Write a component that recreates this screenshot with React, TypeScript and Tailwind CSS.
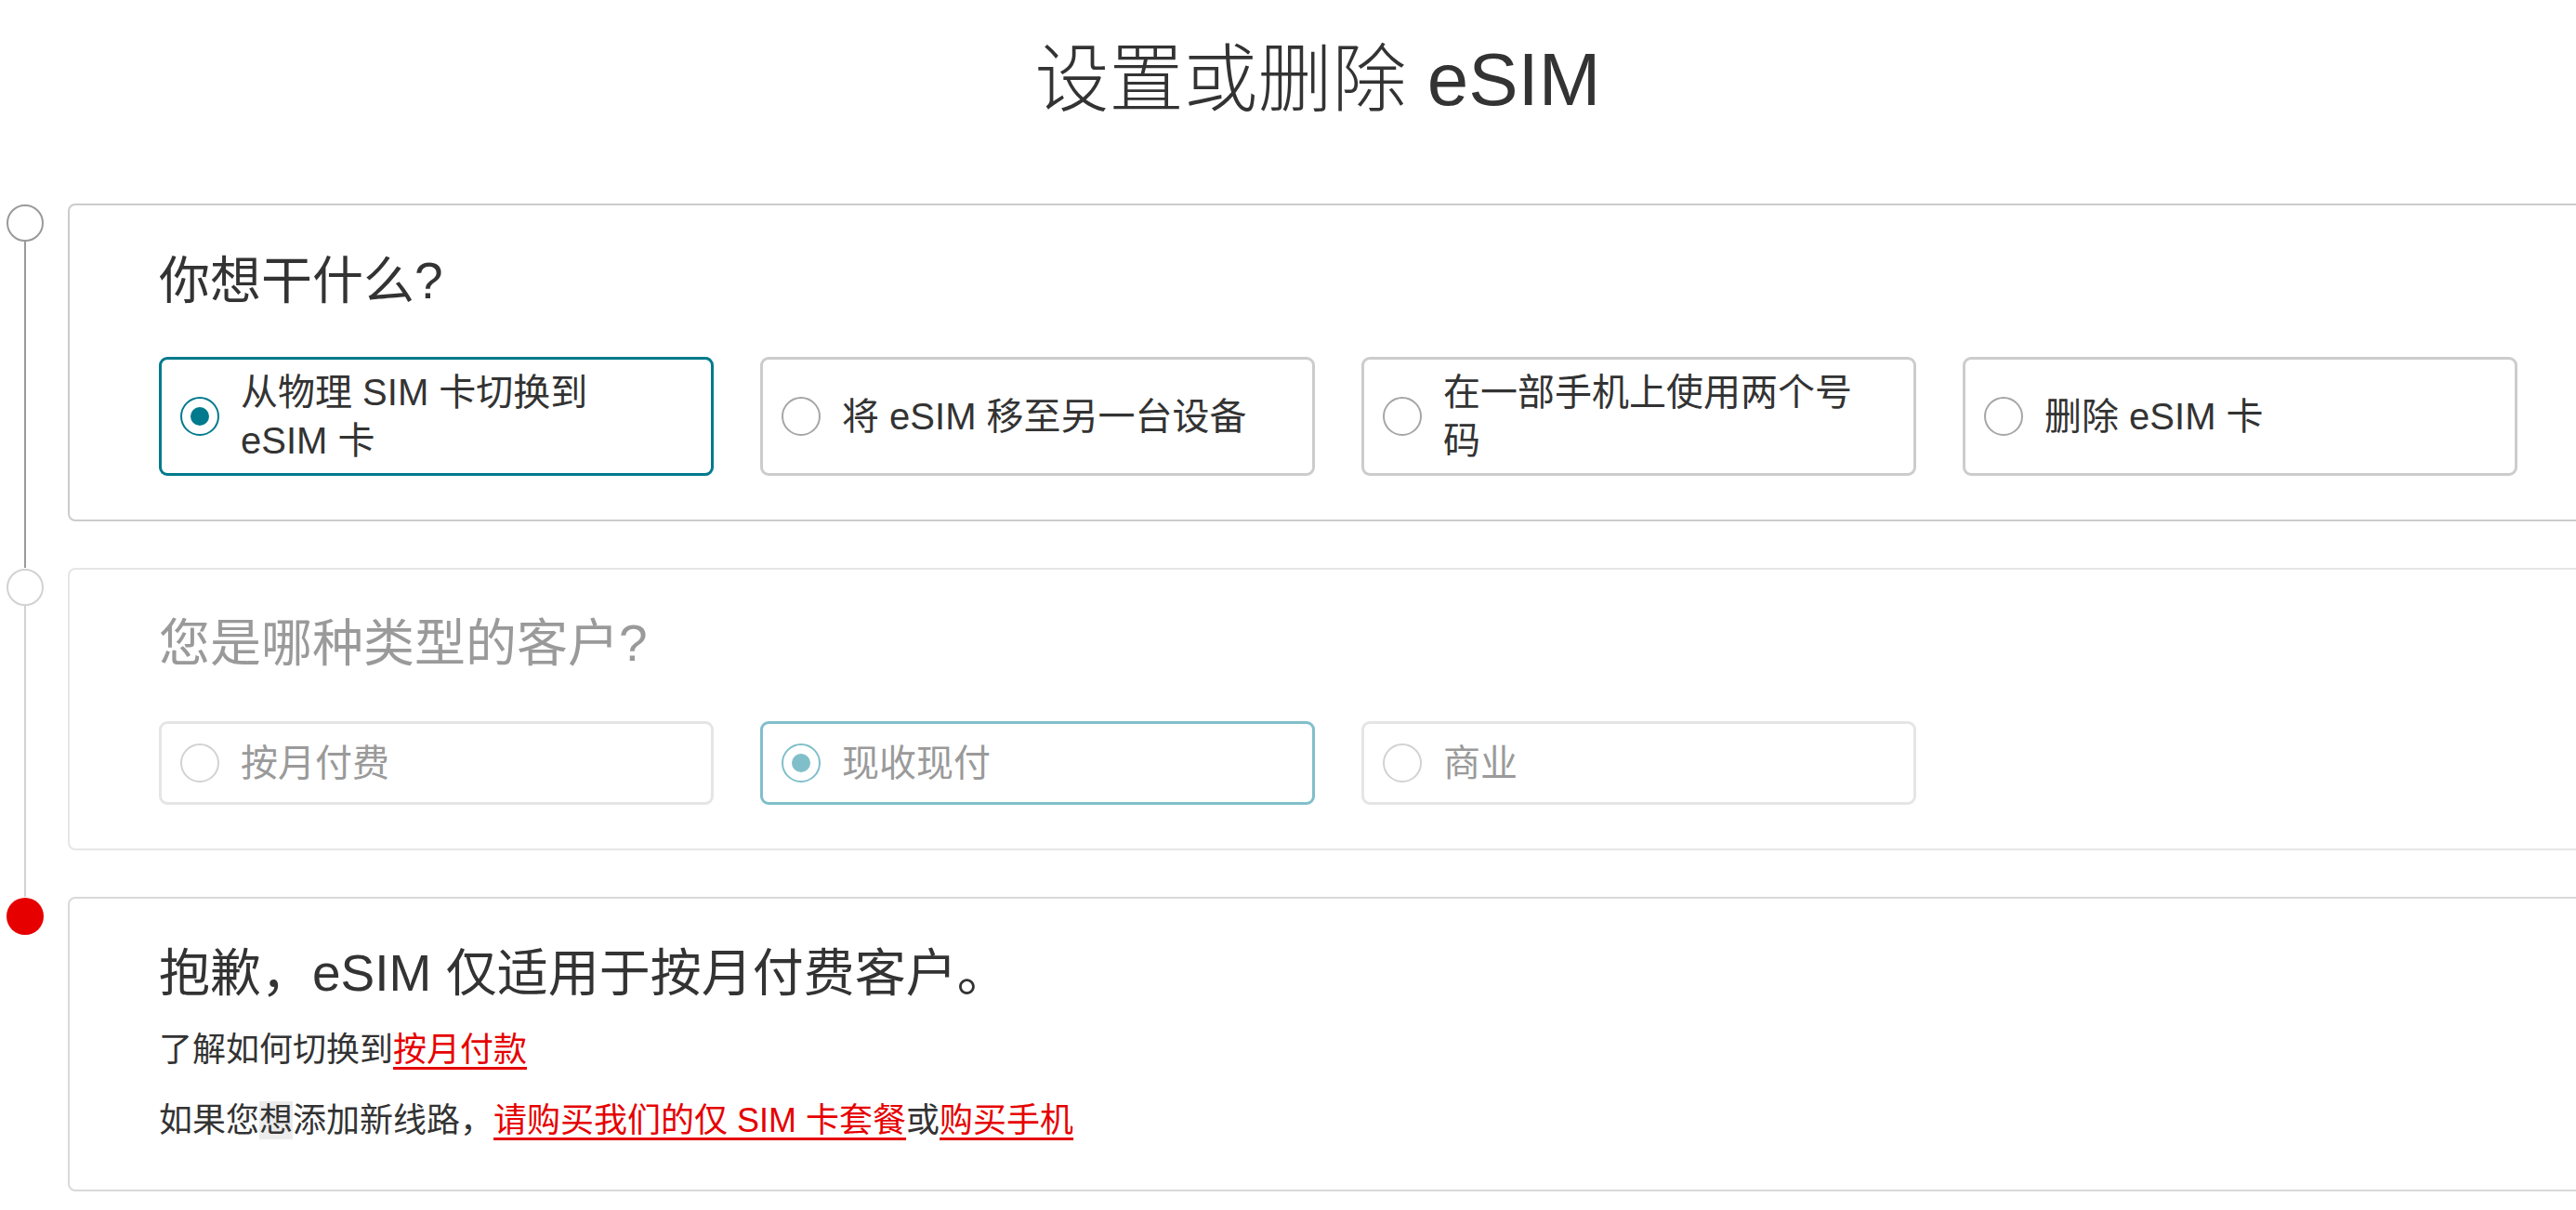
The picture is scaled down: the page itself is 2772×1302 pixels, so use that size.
import React from "react";

const font = "font-['Liberation_Sans','Noto_Sans_CJK_SC',sans-serif]";

type Opt = { label: string; selected?: boolean };

const whatOptions: Opt[] = [
  { label: "从物理 SIM 卡切换到 eSIM 卡", selected: true },
  { label: "将 eSIM 移至另一台设备" },
  { label: "在一部手机上使用两个号码" },
  { label: "删除 eSIM 卡" },
];

const customerOptions: Opt[] = [
  { label: "按月付费" },
  { label: "现收现付", selected: true },
  { label: "商业" },
];

function Radio({ selected, muted }: { selected?: boolean; muted?: boolean }) {
  if (selected) {
    return (
      <span
        className={`flex h-[42px] w-[42px] shrink-0 items-center justify-center rounded-full border-2 ${
          muted ? "border-[#80bfca]" : "border-[#007a8c]"
        }`}
      >
        <span className={`h-[20px] w-[20px] rounded-full ${muted ? "bg-[#80bfca]" : "bg-[#007a8c]"}`} />
      </span>
    );
  }
  return (
    <span
      className={`h-[42px] w-[42px] shrink-0 rounded-full border-2 ${muted ? "border-[#d2d2d2]" : "border-[#a6a6a6]"}`}
    />
  );
}

function OptionBox({ opt, muted }: { opt: Opt; muted?: boolean }) {
  let border = "border-[#cccccc]";
  if (opt.selected) border = muted ? "border-[#80bfca]" : "border-[#007a8c]";
  else if (muted) border = "border-[#e5e5e5]";

  return (
    <div
      className={`flex min-h-[90px] w-[597px] items-center gap-[23px] rounded-[9px] border-[3px] bg-white py-[9px] pl-[20px] pr-[50px] ${border}`}
    >
      <Radio selected={opt.selected} muted={muted} />
      <span className={`text-[40px] leading-[52px] ${muted ? "text-[#9a9a9a]" : "text-[#333333]"}`}>{opt.label}</span>
    </div>
  );
}

function Step({
  dot,
  line,
  cardBorder,
  children,
}: {
  dot: string;
  line?: string;
  cardBorder: string;
  children: React.ReactNode;
}) {
  return (
    <div className="flex">
      {/* rail */}
      <div className="flex w-[54px] shrink-0 flex-col items-center">
        <span className={`mt-[1px] h-[40px] w-[40px] shrink-0 rounded-full ${dot}`} />
        {line && <span className={`w-[2px] flex-1 ${line}`} />}
      </div>

      <div className={`ml-[19px] mr-[-60px] flex-1 ${line ? "pb-[50px]" : "pb-[17px]"}`}>
        <div className={`rounded-[8px] border-2 bg-white pl-[96px] ${cardBorder}`}>{children}</div>
      </div>
    </div>
  );
}

export default function App() {
  return (
    <div className={`w-full overflow-hidden bg-white ${font}`}>
      {/* title */}
      <div className="flex h-[172px] items-center justify-center pl-[64px]">
        <h1 className="text-[80px] font-light leading-none text-[#333333]">设置或删除 eSIM</h1>
      </div>

      <div className="mt-[47px]">
        <Step dot="border-2 border-[#9a9a9a] bg-white" line="bg-[#9a9a9a]" cardBorder="border-[#cccccc]">
          <div className="pb-[47px] pt-[48px]">
            <h2 className="text-[55px] leading-[66px] text-[#333333]">你想干什么?</h2>
            <div className="mt-[49px] flex gap-[50px]">
              {whatOptions.map((o) => (
                <OptionBox key={o.label} opt={o} />
              ))}
            </div>
          </div>
        </Step>

        <Step dot="border-2 border-[#d2d2d2] bg-white" line="bg-[#d2d2d2]" cardBorder="border-[#e6e6e6]">
          <div className="pb-[47px] pt-[46px]">
            <h2 className="text-[55px] leading-[66px] text-[#9a9a9a]">您是哪种类型的客户?</h2>
            <div className="mt-[51px] flex gap-[50px]">
              {customerOptions.map((o) => (
                <OptionBox key={o.label} opt={o} muted />
              ))}
            </div>
          </div>
        </Step>

        <Step dot="bg-[#e60000]" cardBorder="border-[#d9d9d9]">
          <div className="pb-[49px] pt-[47px] text-[#333333]">
            <h2 className="text-[55px] leading-[66px]">抱歉，eSIM 仅适用于按月付费客户。</h2>
            <p className="mt-[25px] text-[36px] leading-[50px]">
              了解如何切换到
              <a href="#" className="text-[#e60000] underline underline-offset-[6px]">
                按月付款
              </a>
            </p>
            <p className="mt-[26px] text-[36px] leading-[50px]">
              如果您<span className="bg-[#ececec]">想</span>添加新线路，
              <a href="#" className="text-[#e60000] underline underline-offset-[6px]">
                请购买我们的仅 SIM 卡套餐
              </a>
              或
              <a href="#" className="text-[#e60000] underline underline-offset-[6px]">
                购买手机
              </a>
            </p>
          </div>
        </Step>
      </div>
    </div>
  );
}
